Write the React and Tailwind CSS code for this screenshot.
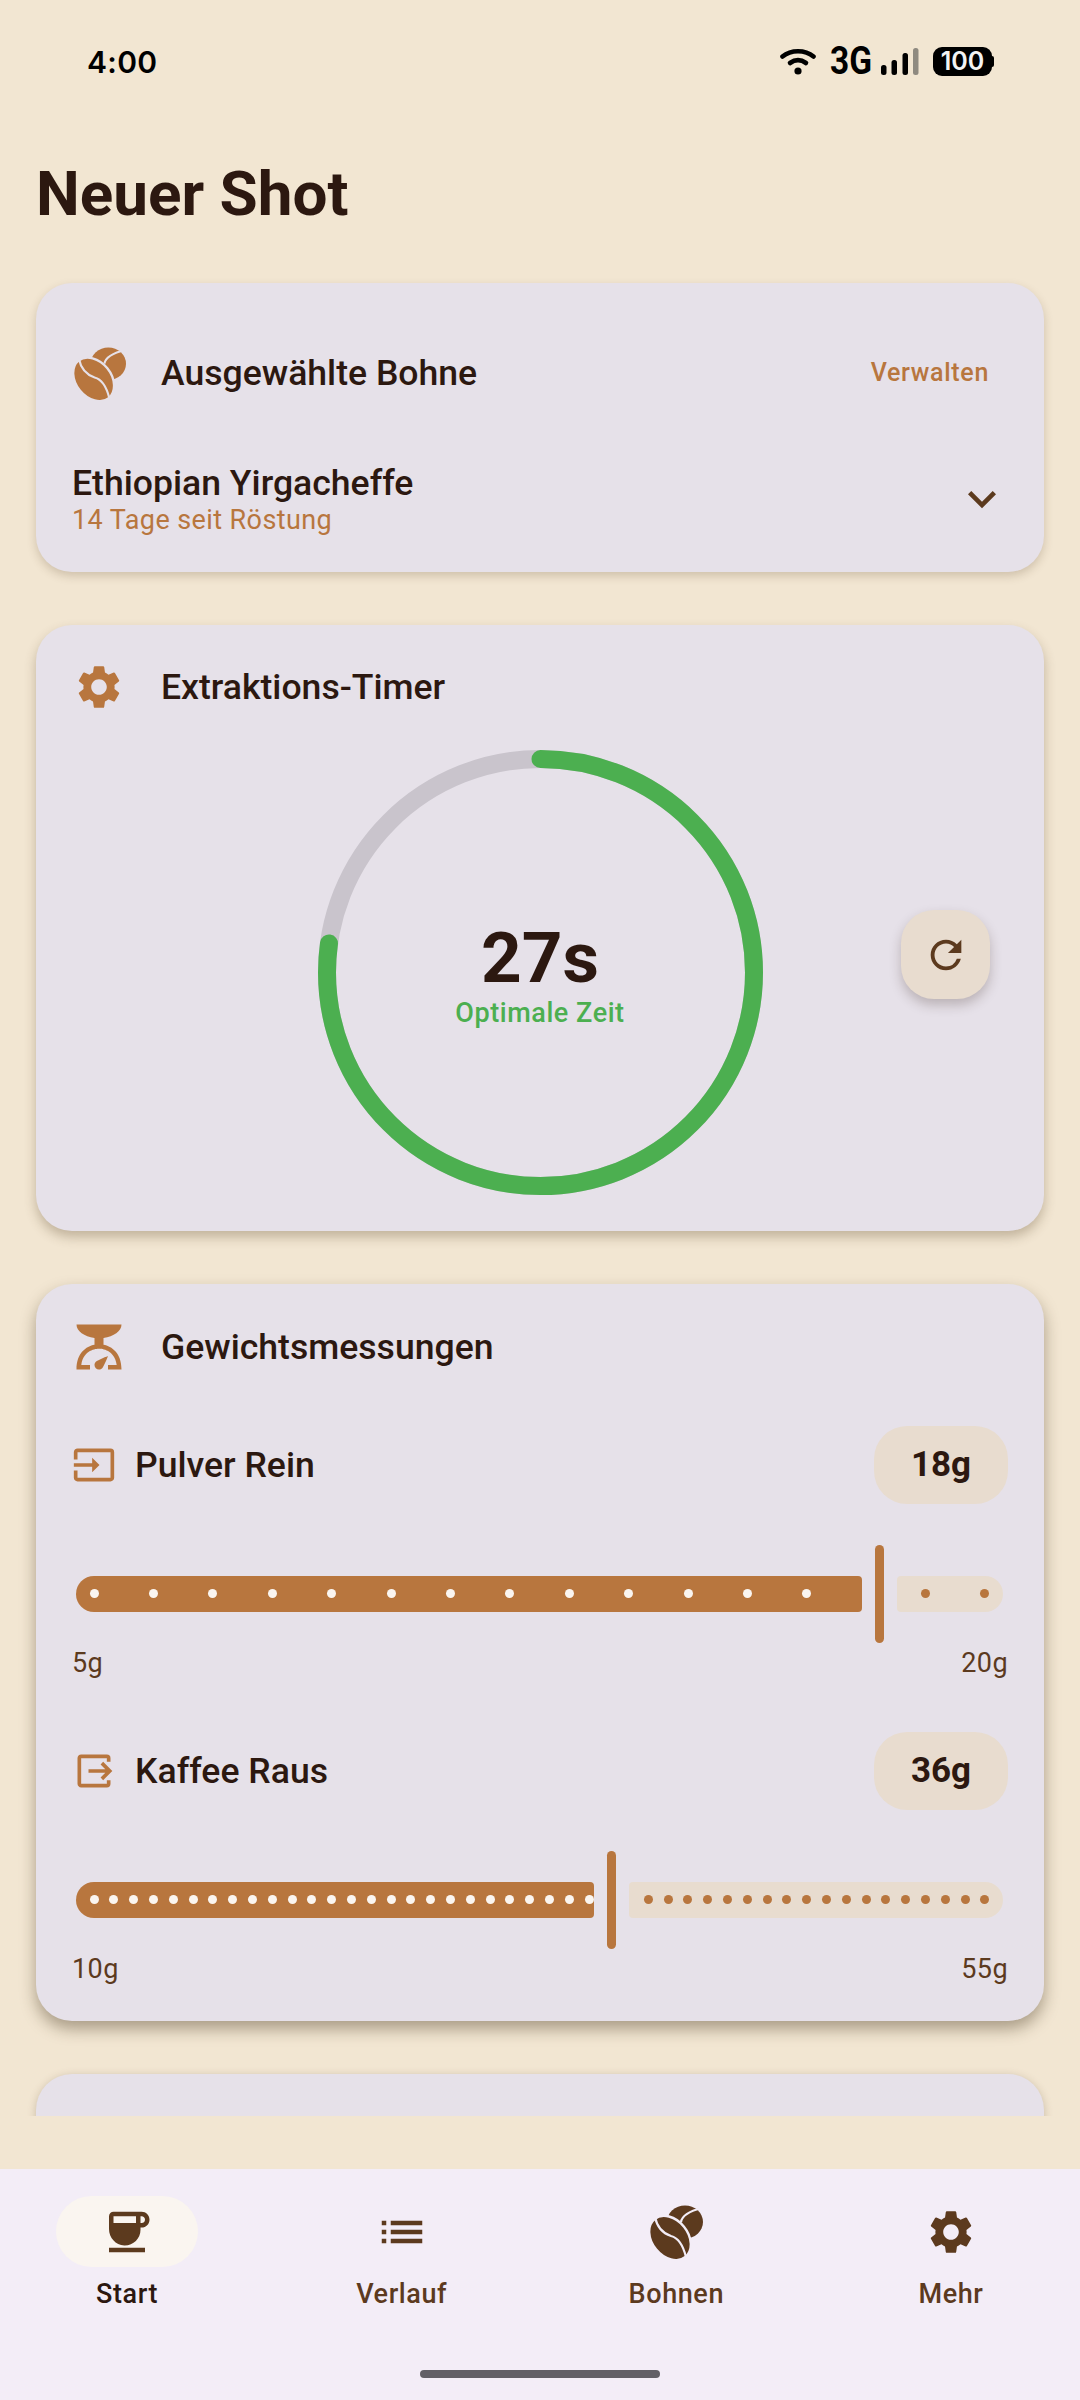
import React from 'react';
import { MdCoffee, MdExpandMore, MdInput, MdList, MdOutput, MdRefresh, MdScale, MdSettings } from 'react-icons/md';

const TRACK_WIDTH = 927;
const DOT_INSET = 18;

function BeanIcon({ cut, className }) {
  return (
    <svg viewBox="0 0 52 54" fill="currentColor" className={className}>
      <ellipse cx="35" cy="17" rx="18" ry="16.5" />
      <ellipse cx="20" cy="33" rx="24.5" ry="18" transform="rotate(51 20 33)" stroke={cut} strokeWidth="2.4" />
      <path d="M5 12C7 22 12 28 21 31C29 33 33 40 36 52" fill="none" stroke={cut} strokeWidth="2.2" />
      <path d="M31 17C32 10 40 6 52 3" fill="none" stroke={cut} strokeWidth="2.2" />
    </svg>
  );
}

function StatusBar() {
  return (
    <div className="h-[158px] flex items-start justify-between pl-[87px] pr-[86px] pt-[44px] text-black">
      <span className="font-['Inter',sans-serif] font-semibold text-[30px] leading-[36px] tracking-[0.3px]">4:00</span>
      <div className="flex items-center h-[30px] mt-[2px]">
        <svg viewBox="0 0 36 27" className="w-[36px] h-[27px]" fill="none" stroke="currentColor" strokeWidth="4.6" strokeLinecap="round">
          <path d="M2.5 8.5C11 1.5 25 1.5 33.5 8.5" />
          <path d="M10 15C15 11.5 21 11.5 26 15" />
          <circle cx="18" cy="23" r="3.6" fill="currentColor" stroke="none" />
        </svg>
        <span className="ml-[14px] w-[38px] origin-left scale-x-[0.88] font-['Roboto',sans-serif] font-bold text-[38px] leading-[30px]">3G</span>
        <svg viewBox="0 0 38 27" className="ml-[13px] w-[38px] h-[27px]" fill="currentColor">
          <rect x="0" y="17" width="5.5" height="10" rx="2.5" />
          <rect x="10.5" y="12" width="5.5" height="15" rx="2.5" />
          <rect x="21.5" y="5" width="5.5" height="22" rx="2.5" />
          <rect x="32" y="0" width="5.5" height="27" rx="2.5" fill="#8f8a80" />
        </svg>
        <div className="ml-[14px] flex items-center">
          <div className="w-[59px] h-[29px] bg-black rounded-[9px] flex items-center justify-center text-[#f3f3f3] font-['Inter',sans-serif] font-semibold text-[25px] leading-[29px]">100</div>
          <div className="w-[2px] h-[11px] bg-black rounded-r-[2px]" />
        </div>
      </div>
    </div>
  );
}

function CardHeader({ icon, title, children }) {
  return (
    <div className="h-[66px] flex items-center">
      <div className="w-[54px] flex items-center justify-center text-[#b8763e]">{icon}</div>
      <h2 className="ml-[35px] flex-1 text-[#2c1810] font-[480] text-[35.6px] leading-[42px]">{title}</h2>
      {children}
    </div>
  );
}

function WeightSlider({ min, max, value }) {
  const steps = max - min;
  const center = ((value - min) / steps) * TRACK_WIDTH;
  const activeWidth = center - 4.5 - 13;
  const inactiveLeft = center + 4.5 + 13;
  const dotX = (i) => DOT_INSET + (i * (TRACK_WIDTH - DOT_INSET * 2)) / steps;
  const dots = Array.from({ length: steps + 1 }, (_, i) => dotX(i));

  return (
    <div className="ml-[4px] w-[927px] h-[98px] flex items-center">
      <div className="relative h-[36px] overflow-hidden rounded-l-[18px] rounded-r-[4px] bg-[#b8763e]" style={{ width: activeWidth }}>
        {dots.filter((x) => x < activeWidth + 5).map((x) => (
          <span key={x} className="absolute top-[13px] w-[9px] h-[9px] rounded-full bg-[#faf5f0]" style={{ left: x - 4.5 }} />
        ))}
      </div>
      <div className="ml-[13px] w-[9px] h-[98px] rounded-full bg-[#b8763e]" />
      <div className="relative ml-[13px] flex-1 h-[36px] overflow-hidden rounded-r-[18px] rounded-l-[4px] bg-[#e8dccf]">
        {dots.filter((x) => x > inactiveLeft + 5).map((x) => (
          <span key={x} className="absolute top-[13px] w-[9px] h-[9px] rounded-full bg-[#b8763e]" style={{ left: x - 4.5 - inactiveLeft }} />
        ))}
      </div>
    </div>
  );
}

function WeightRow({ icon, label, value, min, max }) {
  return (
    <div>
      <div className="flex items-center justify-between h-[78px]">
        <div className="flex items-center">
          <span className="text-[#b8763e]">{icon}</span>
          <span className="ml-[19px] text-[#2c1810] font-[480] text-[35.6px] leading-[42px]">{label}</span>
        </div>
        <div className="w-[134px] h-[78px] rounded-[33px] bg-[#e8dccf] flex items-center justify-center text-[#2c1810] font-bold text-[35px]">{value}g</div>
      </div>
      <div className="mt-[41px]">
        <WeightSlider min={min} max={max} value={value} />
      </div>
      <div className="mt-[4px] flex justify-between text-[#5c3a1e] text-[27px] leading-[32px] tracking-[0.4px]">
        <span>{min}g</span>
        <span>{max}g</span>
      </div>
    </div>
  );
}

function TimerRing({ progress }) {
  const r = 213.5;
  const c = 2 * Math.PI * r;
  return (
    <div className="relative w-[445px] h-[445px]">
      <svg viewBox="0 0 445 445" className="w-[445px] h-[445px] -rotate-90">
        <circle cx="222.5" cy="222.5" r={r} fill="none" stroke="#c9c4cc" strokeWidth="18" />
        <circle cx="222.5" cy="222.5" r={r} fill="none" stroke="#4caf50" strokeWidth="18" strokeLinecap="round" strokeDasharray={`${c * progress} ${c}`} />
      </svg>
      <div className="absolute inset-0 flex flex-col items-center justify-center">
        <span className="text-[#2c1810] font-bold text-[71px] leading-[84px]">27s</span>
        <span className="text-[#4caf50] font-[480] text-[27px] leading-[32px] tracking-[0.55px] -mt-[3px]">Optimale Zeit</span>
      </div>
    </div>
  );
}

function NavItem({ icon, label, active }) {
  return (
    <div className="w-[142px] flex flex-col items-center">
      <div className={`w-[142px] h-[71px] rounded-full flex items-center justify-center text-[#5c3a1e] ${active ? 'bg-[#faf5f0]' : ''}`}>{icon}</div>
      <span className={`mt-[11px] font-[480] text-[27px] leading-[32px] tracking-[0.6px] ${active ? 'text-[#2c1810]' : 'text-[#5c3a1e]'}`}>{label}</span>
    </div>
  );
}

export default function App() {
  return (
    <div className="w-full h-[2400px] flex flex-col bg-[#f2e6d2] font-['Roboto',sans-serif]">
      <div className="h-[2116px] overflow-hidden">
        <StatusBar />
        <h1 className="pl-[36px] text-[#2c1810] font-bold text-[62px] leading-[72px]">Neuer Shot</h1>

        <div className="mt-[53px] px-[36px] flex flex-col gap-[53px]">
          <section className="rounded-[36px] bg-[#e6e1e9] px-[36px] pt-[57px] pb-[36px] shadow-[0_4px_10px_rgba(80,60,30,0.22)]">
            <CardHeader icon={<BeanIcon cut="#e6e1e9" className="w-[53px] h-[53px]" />} title="Ausgewählte Bohne">
              <span className="mr-[19px] text-[#b8763e] font-[480] text-[25px] leading-[30px] tracking-[0.7px]">Verwalten</span>
            </CardHeader>
            <div className="mt-[56px] flex items-center justify-between">
              <div>
                <p className="text-[#2c1810] font-[480] text-[35.6px] leading-[42px]">Ethiopian Yirgacheffe</p>
                <p className="text-[#b8763e] text-[27px] leading-[32px] tracking-[0.4px]">14 Tage seit Röstung</p>
              </div>
              <MdExpandMore className="mr-[-2px] text-[#5c3a1e] w-[56px] h-[56px]" />
            </div>
          </section>

          <section className="rounded-[36px] bg-[#e6e1e9] px-[36px] pt-[29px] pb-[36px] shadow-[0_6px_12px_rgba(80,60,30,0.3)]">
            <CardHeader icon={<MdSettings className="w-[52px] h-[52px]" />} title="Extraktions-Timer" />
            <div className="mt-[30px] grid grid-cols-[1fr_auto_1fr] items-center">
              <div />
              <TimerRing progress={27 / 35} />
              <div className="flex justify-end pr-[18px] pb-[36px]">
                <button className="w-[89px] h-[89px] rounded-[33px] bg-[#e8dccf] flex items-center justify-center text-[#5c3a1e] shadow-[0_6px_12px_rgba(60,40,30,0.25)]">
                  <MdRefresh className="w-[46px] h-[46px]" />
                </button>
              </div>
            </div>
          </section>

          <section className="rounded-[36px] bg-[#e6e1e9] px-[36px] pt-[30px] pb-[36px] shadow-[0_8px_16px_rgba(60,45,20,0.4)]">
            <CardHeader icon={<MdScale className="w-[54px] h-[54px]" />} title="Gewichtsmessungen" />
            <div className="mt-[46px] flex flex-col gap-[53px]">
              <WeightRow icon={<MdInput className="w-[44px] h-[44px]" />} label="Pulver Rein" value={18} min={5} max={20} />
              <WeightRow icon={<MdOutput className="w-[44px] h-[44px]" />} label="Kaffee Raus" value={36} min={10} max={55} />
            </div>
          </section>

          <section className="h-[300px] rounded-[36px] bg-[#e6e1e9] shadow-[0_2px_8px_rgba(80,60,30,0.25)]" />
        </div>
      </div>

      <div className="mt-[53px] flex-1 bg-[#f3edf7] flex flex-col">
        <nav className="pt-[27px] pl-[56px] pr-[58px] flex justify-between">
          <NavItem icon={<MdCoffee className="w-[54px] h-[54px]" />} label="Start" active />
          <NavItem icon={<MdList className="w-[54px] h-[54px]" />} label="Verlauf" />
          <NavItem icon={<BeanIcon cut="#f3edf7" className="w-[54px] h-[54px]" />} label="Bohnen" />
          <NavItem icon={<MdSettings className="w-[52px] h-[52px]" />} label="Mehr" />
        </nav>
        <div className="mt-auto mb-[22px] mx-auto w-[240px] h-[8px] rounded-full bg-[#625f66]" />
      </div>
    </div>
  );
}
